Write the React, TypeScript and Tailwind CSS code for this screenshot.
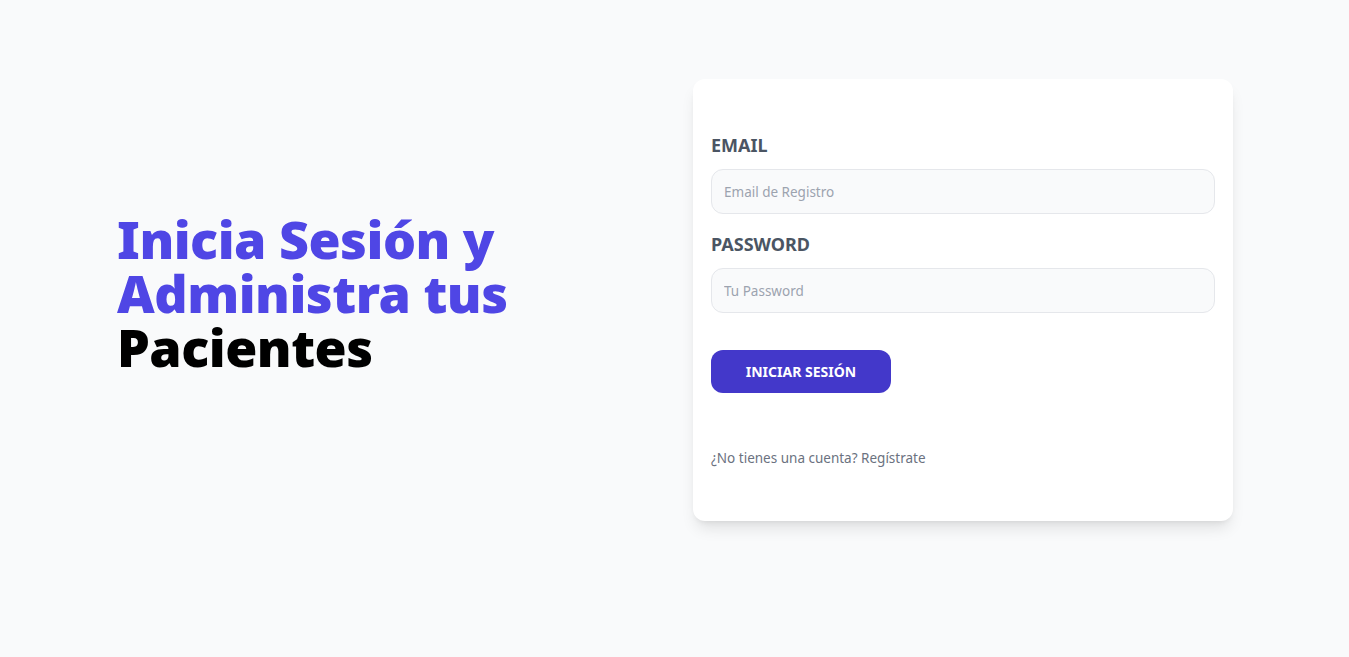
import React from 'react';

const font = { fontFamily: '"Noto Sans", "Open Sans", sans-serif' };

export default function App() {
  return (
    <div className="min-h-screen bg-[#f9fafb]" style={font}>
      <main className="flex items-center pt-[79px] pl-[117px]">
        <div className="w-[576px] pb-[14px]">
          <h1 className="text-[52px] leading-[54px] font-black text-[#4f46e5] tracking-[-0.5px]">
            Inicia Sesión y Administra tus <span className="text-black">Pacientes</span>
          </h1>
        </div>
        <div className="w-[540px] bg-white rounded-xl shadow-lg px-[18px] pt-[52px] pb-[53px]">
          <form>
            <div>
              <label className="block uppercase text-[#4b5563] text-[18px] leading-7 font-bold">Email</label>
              <input
                type="email"
                placeholder="Email de Registro"
                className="mt-[10px] w-full h-[45px] px-3 border border-[#e5e7eb] rounded-xl bg-[#f9fafb] text-[13.5px] placeholder:text-[#9ca3af] outline-none"
              />
            </div>
            <div className="mt-4">
              <label className="block uppercase text-[#4b5563] text-[18px] leading-7 font-bold">Password</label>
              <input
                type="password"
                placeholder="Tu Password"
                className="mt-[10px] w-full h-[45px] px-3 border border-[#e5e7eb] rounded-xl bg-[#f9fafb] text-[13.5px] placeholder:text-[#9ca3af] outline-none"
              />
            </div>
            <button
              type="button"
              className="mt-[37px] w-[180px] h-[43px] bg-[#4338ca] text-white uppercase font-bold text-sm rounded-xl"
            >
              Iniciar Sesión
            </button>
          </form>
          <nav className="mt-[55px]">
            <a href="#" className="block text-[13.5px] leading-5 text-[#6b7280]">
              ¿No tienes una cuenta? Regístrate
            </a>
          </nav>
        </div>
      </main>
    </div>
  );
}
